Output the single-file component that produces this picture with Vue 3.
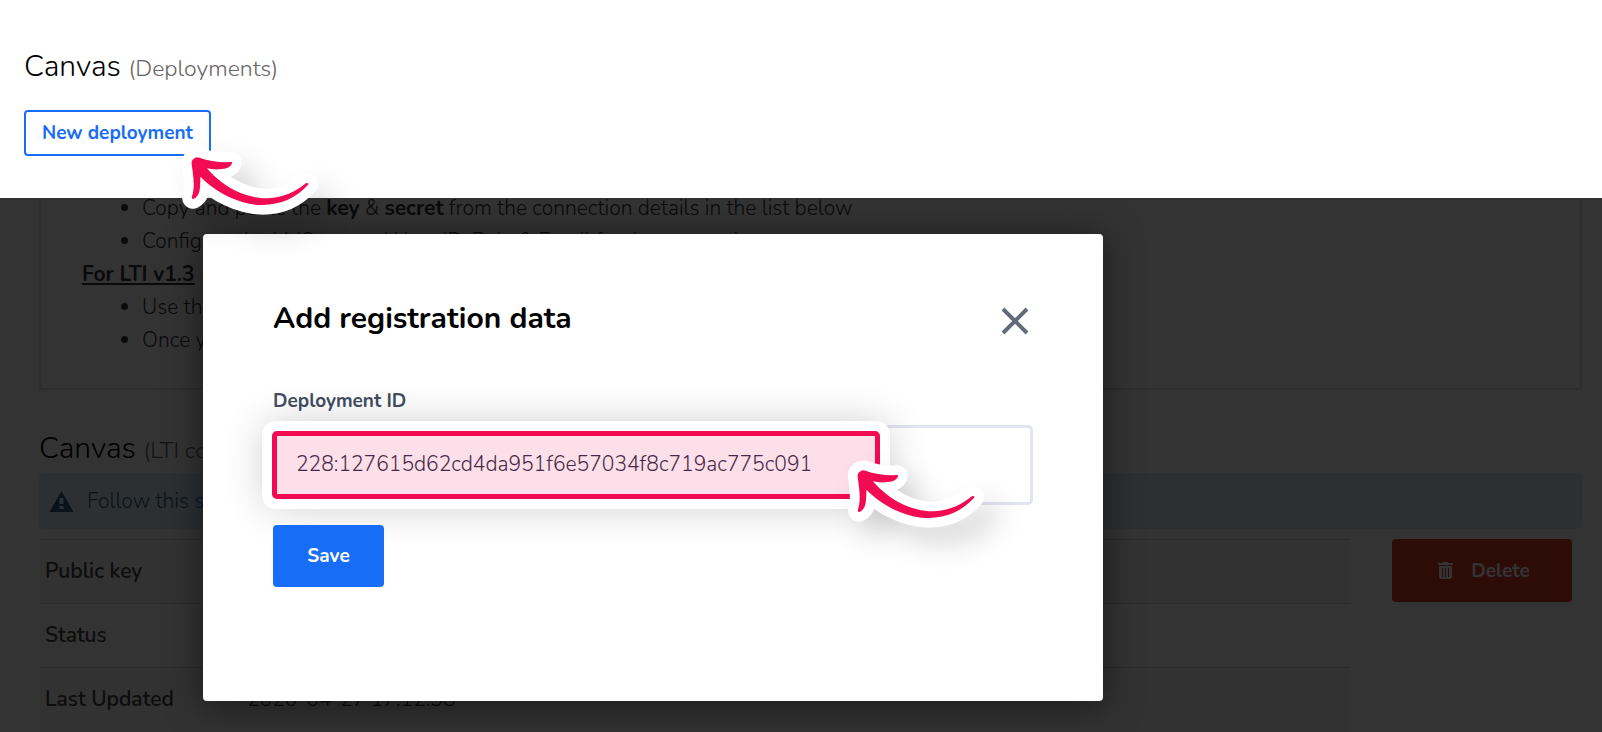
<template>
  <div class="page">
    <header class="top">
      <h1 class="heading">Canvas <small>(Deployments)</small></h1>
      <button class="btn-outline" type="button">New deployment</button>
      <svg class="arrow arrow-top" viewBox="540 345 500 300" aria-hidden="true">
        <path class="halo" :d="arrowPath" />
        <path class="ink" :d="arrowPath" />
      </svg>
    </header>

    <main class="backdrop">
      <section class="help">
        <ul>
          <li>Copy and paste the <b>key</b> &amp; <b>secret</b> from the connection details in the list below</li>
          <li>Configure the LMS to send User ID, Role &amp; Email for the connection</li>
        </ul>
        <h4>For LTI v1.3</h4>
        <ul>
          <li>Use the</li>
          <li>Once you</li>
        </ul>
      </section>

      <h2 class="heading sub">Canvas <small>(LTI connection)</small></h2>
      <div class="alert">
        <svg class="warn" viewBox="0 0 24 21" aria-hidden="true">
          <path d="M12 0 24 21H0Z" />
          <path class="mark" d="M10 7h4v6h-4zM10 15h4v3h-4z" />
        </svg>
        <span>Follow this <a href="#">setup</a></span>
      </div>

      <div class="details">
        <table>
          <tbody>
            <tr v-for="row in rows" :key="row.label">
              <th scope="row">{{ row.label }}</th>
              <td>{{ row.value }}</td>
            </tr>
          </tbody>
        </table>
        <button class="btn-delete" type="button">
          <svg viewBox="0 0 15 17" aria-hidden="true">
            <path fill-rule="evenodd" d="M5 0h5v1h5v2H0V1h5zM1 4h13v11q0 2-2 2H3q-2 0-2-2zM4 6v9h1V6zM7 6v9h1V6zM10 6v9h1V6z" />
          </svg>
          Delete
        </button>
      </div>

      <div class="overlay">
        <form class="modal" role="dialog" aria-labelledby="modal-title" @submit.prevent>
          <div class="modal-head">
            <h3 id="modal-title">Add registration data</h3>
            <button class="close" type="button" aria-label="Close">
              <svg viewBox="0 0 26 26"><path d="M1 1 25 25M25 1 1 25" /></svg>
            </button>
          </div>
          <label for="deployment-id">Deployment ID</label>
          <div class="field">
            <input id="deployment-id" v-model="deploymentId" type="text" spellcheck="false" />
            <span class="highlight"></span>
            <svg class="arrow arrow-field" viewBox="540 345 500 300" aria-hidden="true">
              <path class="halo" :d="arrowPath" />
              <path class="ink" :d="arrowPath" />
            </svg>
          </div>
          <button class="btn-save" type="submit">Save</button>
        </form>
      </div>
    </main>
  </div>
</template>

<script setup>
import { ref } from 'vue'

const deploymentId = ref('228:127615d62cd4da951f6e57034f8c719ac775c091')

const rows = [
  { label: 'Public key', value: '' },
  { label: 'Status', value: '' },
  { label: 'Last Updated', value: '2020-04-27 17:12:38' }
]

const arrowPath = 'M577 396Q578 388 588 383Q594 380 601 383Q645 399 696 396Q701 397 698 401Q692 415 668 417Q645 420 623 415C675 475 745 506 805 505C855 504 892 482 920 460Q927 457 928 463C892 504 845 525 790 525C720 524 650 487 604 440C602 470 606 495 583 507Q577 508 578 501C590 465 580 430 577 396Z'
</script>

<style>
body { margin: 0; }
</style>

<style scoped>
.page { min-height: 100vh; display: flex; flex-direction: column; font-family: Nunito, Lato, "Liberation Sans", sans-serif; font-size: 21px; line-height: 33px; font-weight: 300; color: #33363a; background: #fff; }
.page * { box-sizing: border-box; }
button, input { font-family: inherit; }

.heading { margin: 0; font-size: 30px; line-height: 40px; font-weight: 300; color: #000; }
.heading small { font-size: 23px; color: #666; }

.top { position: relative; z-index: 3; height: 198px; padding: 47px 24px 0; background: #fff; }
.btn-outline { display: block; height: 46px; margin-top: 21px; padding: 0 16px; border: 2px solid #186df7; border-radius: 4px; background: #fff; color: #186df7; font-size: 19px; font-weight: 700; }

.backdrop { position: relative; flex: 1; overflow: hidden; padding: 0 20px 0 39px; }
.help { margin-top: -6px; padding: 0 41px 31px; border: 2px solid #e3e3e3; border-top: 0; }
.help ul { margin: 0; padding-left: 60px; }
.help b, .help h4 { font-weight: 700; }
.help h4 { margin: 0; font-size: 21px; text-decoration: underline; }
.sub { margin: 39px 0 2px; }

.alert { display: flex; align-items: center; gap: 13px; height: 56px; padding: 0 10px; border-radius: 4px; background: #dceefa; color: #31607f; }
.warn { width: 25px; height: 21px; fill: #31607f; }
.warn .mark { fill: #dceefa; }
.alert a { color: #186df7; text-decoration: none; }

.details { display: flex; align-items: flex-start; gap: 42px; margin-top: 10px; padding-right: 10px; }
table { flex: 1; border-collapse: collapse; }
tr:nth-child(odd) { background: #f8f8f8; }
th, td { height: 64px; padding: 0 6px; border-top: 1px solid #dcdcdc; text-align: left; }
th { width: 202px; font-weight: 600; color: #444; }
.btn-delete { display: flex; align-items: center; justify-content: center; gap: 18px; width: 180px; height: 63px; padding: 0 4px 0 8px; border: 0; border-radius: 4px; background: #e13723; color: #fff; font-size: 19px; font-weight: 700; }
.btn-delete svg { width: 15px; height: 17px; fill: #fff; }

.overlay { position: absolute; inset: 0; padding: 36px 24px 0 203px; background: rgba(0, 0, 0, 0.8); }
.modal { max-width: 900px; height: 467px; padding: 65px 70px 0; border-radius: 4px; background: #fff; box-shadow: 0 4px 36px rgba(0, 0, 0, 0.5); }
.modal-head { display: flex; align-items: center; justify-content: space-between; padding-right: 5px; }
.modal-head h3 { margin: 0; font-size: 30px; line-height: 40px; font-weight: 700; color: #000; }
.close { display: flex; padding: 0; border: 0; background: none; }
.close svg { width: 26px; height: 26px; margin-top: 4px; overflow: visible; fill: none; stroke: #636b7a; stroke-width: 4; }
.modal label { display: block; margin-top: 46px; font-size: 19px; line-height: 32px; font-weight: 700; color: #434d62; }

.field { position: relative; margin-top: 8px; }
.field input { display: block; width: 100%; height: 80px; padding: 0 20px 2px; border: 3px solid #e2e4ef; border-radius: 5px; background: #fff; color: #2c2f46; font-size: 21px; font-weight: 300; outline: 0; }
.highlight { position: absolute; top: 6px; left: -1px; width: 608px; height: 68px; border: 5px solid #f20a52; border-radius: 5px; background: rgba(242, 10, 82, 0.13); box-shadow: 0 0 0 10px #fff, 0 0 40px 8px rgba(0, 0, 0, 0.2); pointer-events: none; }
.btn-save { position: relative; display: block; width: 111px; height: 62px; margin-top: 20px; border: 0; border-radius: 4px; background: #186df7; color: #fff; font-size: 19px; font-weight: 700; }

.arrow { position: absolute; width: 167px; height: 100px; overflow: visible; filter: drop-shadow(14px 16px 14px rgba(0, 0, 0, 0.16)); pointer-events: none; }
.arrow-top { top: 145px; left: 179px; }
.arrow-field { top: 33px; left: 572px; z-index: 1; }
.halo { fill: #fff; stroke: #fff; stroke-width: 58; stroke-linejoin: round; }
.ink { fill: #f20a52; }
</style>
